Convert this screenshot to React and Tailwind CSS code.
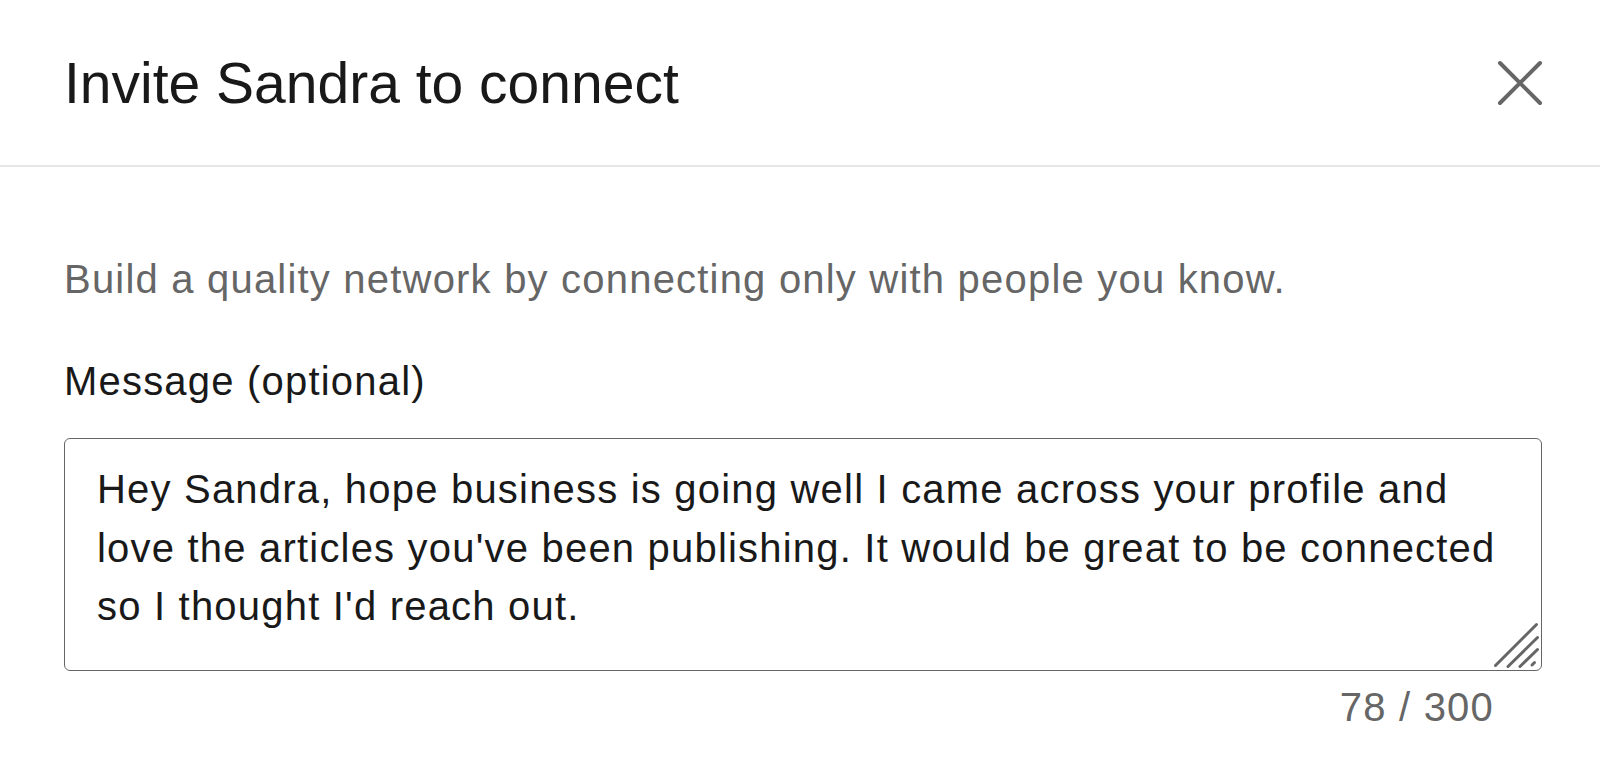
import React from 'react';

const lines = [
  'Hey Sandra, hope business is going well I came across your profile and',
  "love the articles you've been publishing. It would be great to be connected",
  "so I thought I'd reach out.",
];

const CloseIcon = () => (
  <svg width="46" height="46" viewBox="0 0 46 46" fill="none">
    <path d="M3 3L43 43M43 3L3 43" stroke="#666666" strokeWidth="4" strokeLinecap="round" />
  </svg>
);

const ResizeHandle = () => (
  <svg
    className="absolute right-0 bottom-0"
    width="50"
    height="50"
    viewBox="0 0 50 50"
    fill="none"
  >
    <g stroke="#666666" strokeWidth="3" strokeLinecap="round">
      <path d="M45.5 4.5L4.5 45.5" />
      <path d="M46.5 17.5L17 46.5" />
      <path d="M46.5 29.5L29 46.5" />
      <path d="M43.5 42.5L41 45" />
    </g>
  </svg>
);

export default function App() {
  return (
    <div className="w-[1600px] h-[764px] bg-white overflow-hidden font-['Liberation_Sans',Arial,sans-serif]">
      <header className="h-[167px] flex items-center justify-between pl-[64px] pr-[57px] border-b-2 border-[#e6e6e6]">
        <h2 className="text-[57px] leading-[68px] text-[#191919] font-normal">
          Invite Sandra to connect
        </h2>
        <button className="w-[46px] h-[46px] flex items-center justify-center">
          <CloseIcon />
        </button>
      </header>

      <div className="pl-[64px] pr-[58px] pt-[83px] tracking-[1.2px]">
        <p className="text-[40px] leading-[58px] text-[#666666]">
          Build a quality network by connecting only with people you know.
        </p>

        <label className="block mt-[44px] text-[40px] leading-[58px] text-[#191919]">
          Message (optional)
        </label>

        <div className="relative mt-[28px] h-[233px] border-[1.5px] border-[#666666] rounded-[6px] pl-[32px] pt-[21px] text-[40px] leading-[58.5px] text-[#191919]">
          {lines.map((line, i) => (
            <div key={i} className="whitespace-nowrap">
              {line}
            </div>
          ))}
          <ResizeHandle />
        </div>

        <div className="mt-[7px] pr-[48px] text-right text-[40px] leading-[58px] text-[#666666]">
          78 / 300
        </div>
      </div>
    </div>
  );
}
